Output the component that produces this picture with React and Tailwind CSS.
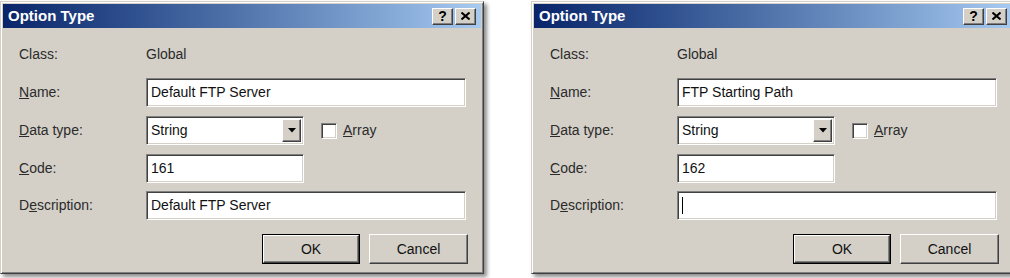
import React from "react";

const font = { fontFamily: '"Liberation Sans", Arial, sans-serif' };

const raised =
  "border border-t-white border-l-white border-b-[#404040] border-r-[#404040] shadow-[inset_-1px_-1px_0_#808080,inset_1px_1px_0_#d4d0c8] bg-[#d4d0c8]";
const sunken =
  "border border-t-[#808080] border-l-[#808080] border-b-white border-r-white shadow-[inset_1px_1px_0_#404040,inset_-1px_-1px_0_#d4d0c8] bg-white";

function Label({ children }) {
  return <div className="w-[127px] shrink-0 text-[14px] text-[#2b2b2b]">{children}</div>;
}

function TextBox({ value, width, caret }) {
  return (
    <div className={`${sunken} h-[29px] flex items-center pl-[4px] text-[14px] text-[#111]`} style={{ width }}>
      {value}
      {caret && <span className="w-px h-[17px] bg-black" />}
    </div>
  );
}

function TitleButton({ children }) {
  return (
    <div className={`${raised} w-[21px] h-[17px] flex items-center justify-center`}>{children}</div>
  );
}

function Dialog({ name, code, description }) {
  return (
    <div
      className="w-[484px] h-[273px] shrink-0 mt-[1px] bg-[#d4d0c8] border border-t-[#d4d0c8] border-l-[#d4d0c8] border-b-[#404040] border-r-[#404040] shadow-[inset_1px_1px_0_white,inset_-1px_-1px_0_#808080,3px_3px_4px_rgba(0,0,0,0.45)] p-[2px] flex flex-col"
      style={font}
    >
      <div className="h-[24px] bg-gradient-to-r from-[#0a246a] to-[#a6caf0] flex items-center justify-between pl-[5px] pr-[5px]">
        <span className="text-white font-bold text-[15px]">Option Type</span>
        <div className="flex gap-[2px]">
          <TitleButton>
            <span className="font-bold text-[14px] leading-none text-black">?</span>
          </TitleButton>
          <TitleButton>
            <svg width="9" height="8" viewBox="0 0 9 8">
              <path d="M0.5 0.5 L8.5 7.5 M8.5 0.5 L0.5 7.5" stroke="black" strokeWidth="2" />
            </svg>
          </TitleButton>
        </div>
      </div>

      <div className="flex flex-col pl-[16px] pt-[12px]">
        <div className="flex items-center h-[29px]">
          <Label>Class:</Label>
          <span className="text-[14px] text-[#2b2b2b]">Global</span>
        </div>
        <div className="flex items-center h-[29px] mt-[9px]">
          <Label>
            <u>N</u>ame:
          </Label>
          <TextBox value={name} width={320} />
        </div>
        <div className="flex items-center h-[29px] mt-[9px]">
          <Label>
            <u>D</u>ata type:
          </Label>
          <div className={`${sunken} w-[158px] h-[29px] flex items-center justify-between pl-[4px] pr-[2px] text-[14px] text-[#111]`}>
            String
            <div className={`${raised} w-[19px] h-[23px] flex items-center justify-center`}>
              <svg width="8" height="5" viewBox="0 0 8 5">
                <path d="M0 0 H8 L4 4.5 Z" fill="black" />
              </svg>
            </div>
          </div>
          <div className={`${sunken} w-[16px] h-[16px] ml-[17px]`} />
          <span className="ml-[6px] text-[14px] text-[#2b2b2b]">
            <u>A</u>rray
          </span>
        </div>
        <div className="flex items-center h-[29px] mt-[9px]">
          <Label>
            <u>C</u>ode:
          </Label>
          <TextBox value={code} width={158} />
        </div>
        <div className="flex items-center h-[29px] mt-[8px]">
          <Label>
            D<u>e</u>scription:
          </Label>
          <TextBox value={description} width={320} caret={!description} />
        </div>
        <div className="flex justify-end gap-[9px] mt-[14px] pr-[13px]">
          <div className="border border-black">
            <div className={`${raised} w-[96px] h-[28px] flex items-center justify-center text-[14px] text-[#111]`}>OK</div>
          </div>
          <div className={`${raised} w-[99px] h-[30px] flex items-center justify-center text-[14px] text-[#111]`}>Cancel</div>
        </div>
      </div>
    </div>
  );
}

export default function App() {
  return (
    <div className="w-[1010px] h-[278px] bg-white flex gap-[47px] overflow-hidden">
      <Dialog name="Default FTP Server" code="161" description="Default FTP Server" />
      <Dialog name="FTP Starting Path" code="162" description="" />
    </div>
  );
}
